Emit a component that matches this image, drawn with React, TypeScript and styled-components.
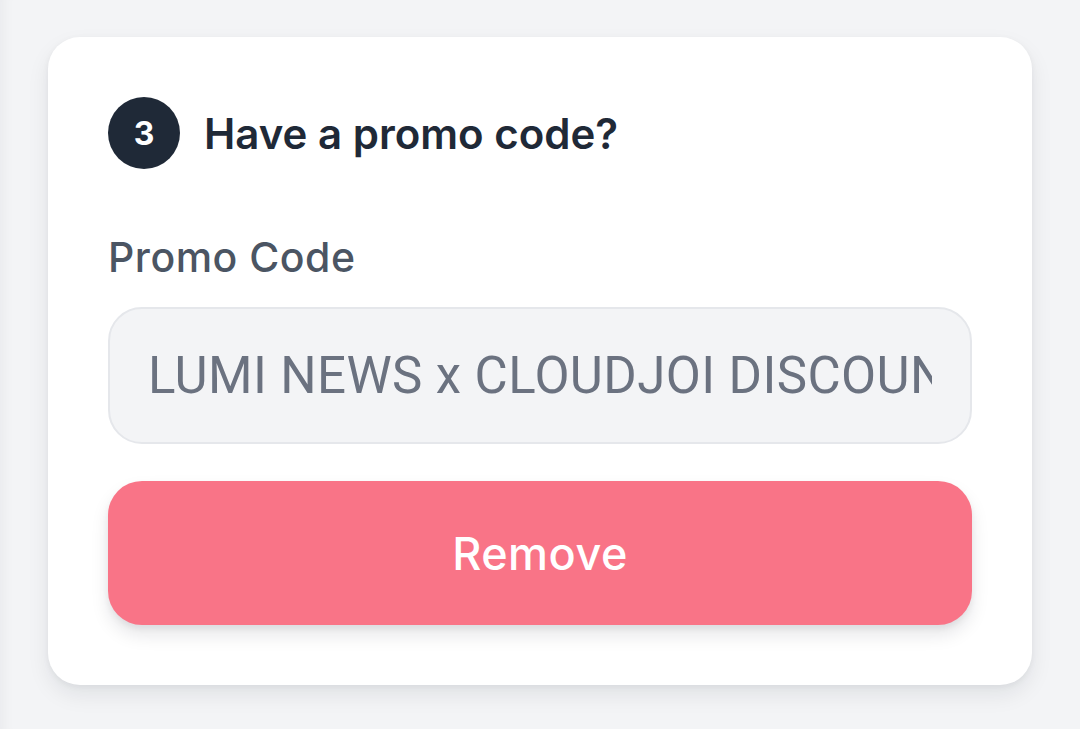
import React from "react";
import styled, { createGlobalStyle } from "styled-components";

const Global = createGlobalStyle`
  html, body {
    margin: 0;
    padding: 0;
    background: #f3f4f6;
    font-family: Inter, "Noto Sans", sans-serif;
  }
  * { box-sizing: border-box; }
`;

const Page = styled.div`
  width: 1080px;
  height: 729px;
  padding: 37px 48px;
  background: #f3f4f6;
  box-shadow: inset 14px 0 14px -12px rgba(17, 24, 39, 0.05);
`;

const Card = styled.section`
  width: 984px;
  background: #ffffff;
  border-radius: 32px;
  padding: 60px 60px 60px;
  box-shadow: 0 10px 22px rgba(17, 24, 39, 0.08), 0 2px 6px rgba(17, 24, 39, 0.05);
  display: flex;
  flex-direction: column;
`;

const StepHeader = styled.div`
  display: flex;
  align-items: center;
  gap: 24px;
  height: 72px;
`;

const StepBadge = styled.div`
  width: 72px;
  height: 72px;
  border-radius: 50%;
  background: #1f2937;
  color: #ffffff;
  display: flex;
  align-items: center;
  justify-content: center;
  font-weight: 700;
  font-size: 32px;
  flex-shrink: 0;
`;

const StepTitle = styled.h2`
  margin: 0;
  font-size: 42px;
  font-weight: 600;
  color: #1f2937;
`;

const Label = styled.label`
  display: block;
  margin-top: 66px;
  font-size: 41px;
  line-height: 44px;
  font-weight: 500;
  letter-spacing: 0.5px;
  color: #4b5563;
`;

const Input = styled.input`
  margin-top: 28px;
  width: 100%;
  height: 137px;
  border: 2px solid #e5e7eb;
  border-radius: 34px;
  background: #f3f4f6;
  padding: 0 38px;
  font-family: Roboto, "Liberation Sans", sans-serif;
  font-size: 51px;
  letter-spacing: 0.4px;
  color: #6b7280;
  outline: none;
`;

const RemoveButton = styled.button`
  margin-top: 37px;
  width: 100%;
  height: 144px;
  border: none;
  border-radius: 34px;
  background: #f97487;
  color: #ffffff;
  font-family: Inter, "Noto Sans", sans-serif;
  font-size: 45px;
  font-weight: 500;
  letter-spacing: 0.5px;
  box-shadow: 0 10px 18px rgba(17, 24, 39, 0.1), 0 4px 6px rgba(17, 24, 39, 0.06);
  cursor: pointer;
`;

export default function App() {
  return (
    <>
      <Global />
      <Page>
        <Card>
          <StepHeader>
            <StepBadge>3</StepBadge>
            <StepTitle>Have a promo code?</StepTitle>
          </StepHeader>
          <Label htmlFor="promo">Promo Code</Label>
          <Input id="promo" defaultValue="LUMI NEWS x CLOUDJOI DISCOUNT" readOnly />
          <RemoveButton>Remove</RemoveButton>
        </Card>
      </Page>
    </>
  );
}
